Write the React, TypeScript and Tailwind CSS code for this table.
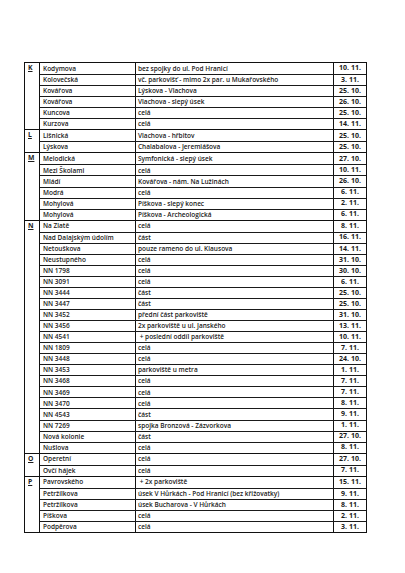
import React from "react";

type Row = [string, string, string];
type Group = { letter: string; rows: Row[] };

const groups: Group[] = [
  {
    letter: "K",
    rows: [
      ["Kodymova", "bez spojky do ul. Pod Hranicí", "10. 11."],
      ["Kolovečská", "vč. parkovišť - mimo 2x par. u Mukařovského", "3. 11."],
      ["Kovářova", "Lýskova - Vlachova", "25. 10."],
      ["Kovářova", "Vlachova - slepý úsek", "26. 10."],
      ["Kuncova", "celá", "25. 10."],
      ["Kurzova", "celá", "14. 11."],
    ],
  },
  {
    letter: "L",
    rows: [
      ["Lišnická", "Vlachova - hřbitov", "25. 10."],
      ["Lýskova", "Chalabalova - Jeremiášova", "25. 10."],
    ],
  },
  {
    letter: "M",
    rows: [
      ["Melodická", "Symfonická - slepý úsek", "27. 10."],
      ["Mezi Školami", "celá", "10. 11."],
      ["Mládí", "Kovářova - nám. Na Lužinách", "26. 10."],
      ["Modrá", "celá", "6. 11."],
      ["Mohylová", "Píškova - slepý konec", "2. 11."],
      ["Mohylová", "Píškova - Archeologická", "6. 11."],
    ],
  },
  {
    letter: "N",
    rows: [
      ["Na Zlatě", "celá", "8. 11."],
      ["Nad Dalajským údolím", "část", "16. 11."],
      ["Netouškova", "pouze rameno do ul. Klausova", "14. 11."],
      ["Neustupného", "celá", "31. 10."],
      ["NN 1798", "celá", "30. 10."],
      ["NN 3091", "celá", "6. 11."],
      ["NN 3444", "část", "25. 10."],
      ["NN 3447", "část", "25. 10."],
      ["NN 3452", "přední část parkoviště", "31. 10."],
      ["NN 3456", "2x parkoviště u ul. Janského", "13. 11."],
      ["NN 4541", " + poslední oddíl parkoviště", "10. 11."],
      ["NN 1809", "celá", "7. 11."],
      ["NN 3448", "celá", "24. 10."],
      ["NN 3453", "parkoviště u metra", "1. 11."],
      ["NN 3468", "celá", "7. 11."],
      ["NN 3469", "celá", "7. 11."],
      ["NN 3470", "celá", "8. 11."],
      ["NN 4543", "část", "9. 11."],
      ["NN 7269", "spojka Bronzová - Zázvorkova", "1. 11."],
      ["Nová kolonie", "část", "27. 10."],
      ["Nušlova", "celá", "8. 11."],
    ],
  },
  {
    letter: "O",
    rows: [
      ["Operetní", "celá", "27. 10."],
      ["Ovčí hájek", "celá", "7. 11."],
    ],
  },
  {
    letter: "P",
    rows: [
      ["Pavrovského", " + 2x parkoviště", "15. 11."],
      ["Petržílkova", "úsek V Hůrkách - Pod Hranicí (bez křižovatky)", "9. 11."],
      ["Petržílkova", "úsek Bucharova - V Hůrkách", "8. 11."],
      ["Píškova", "celá", "2. 11."],
      ["Podpěrova", "celá", "3. 11."],
    ],
  },
];

export default function App() {
  return (
    <div
      className="w-[405px] h-[573px] bg-white pl-[24px] pt-[62px] text-[#1a1a1a]"
      style={{ fontFamily: '"Open Sans", "Liberation Sans", sans-serif' }}
    >
      <div className="w-[343px] border border-[#111] border-b-[1.5px] border-r-[1.5px]">
        {groups.map((g, gi) => (
          <div
            key={g.letter}
            className={`flex ${gi > 0 ? "border-t border-[#111]" : ""}`}
          >
            <div className="w-[15px] shrink-0 border-r border-[#111] pl-[3px] text-[6.8px] font-bold underline leading-[10px]">
              {g.letter}
            </div>
            <div className="flex-1 flex flex-col">
              {g.rows.map((r, ri) => (
                <div
                  key={ri}
                  className={`flex h-[11.05px] items-center ${ri > 0 ? "border-t border-[#1a1a1a]" : ""}`}
                >
                  <div className="w-[96px] shrink-0 h-full flex items-center border-r border-[#111] pl-[3px] text-[6.5px] font-semibold whitespace-nowrap overflow-hidden">
                    {r[0]}
                  </div>
                  <div className="flex-1 h-full flex items-center border-r border-[#111] pl-[2px] text-[6.5px] font-semibold whitespace-pre overflow-hidden">
                    {r[1]}
                  </div>
                  <div className="w-[32px] shrink-0 h-full flex items-center justify-center text-[7px] font-bold whitespace-nowrap">
                    {r[2]}
                  </div>
                </div>
              ))}
            </div>
          </div>
        ))}
      </div>
    </div>
  );
}
